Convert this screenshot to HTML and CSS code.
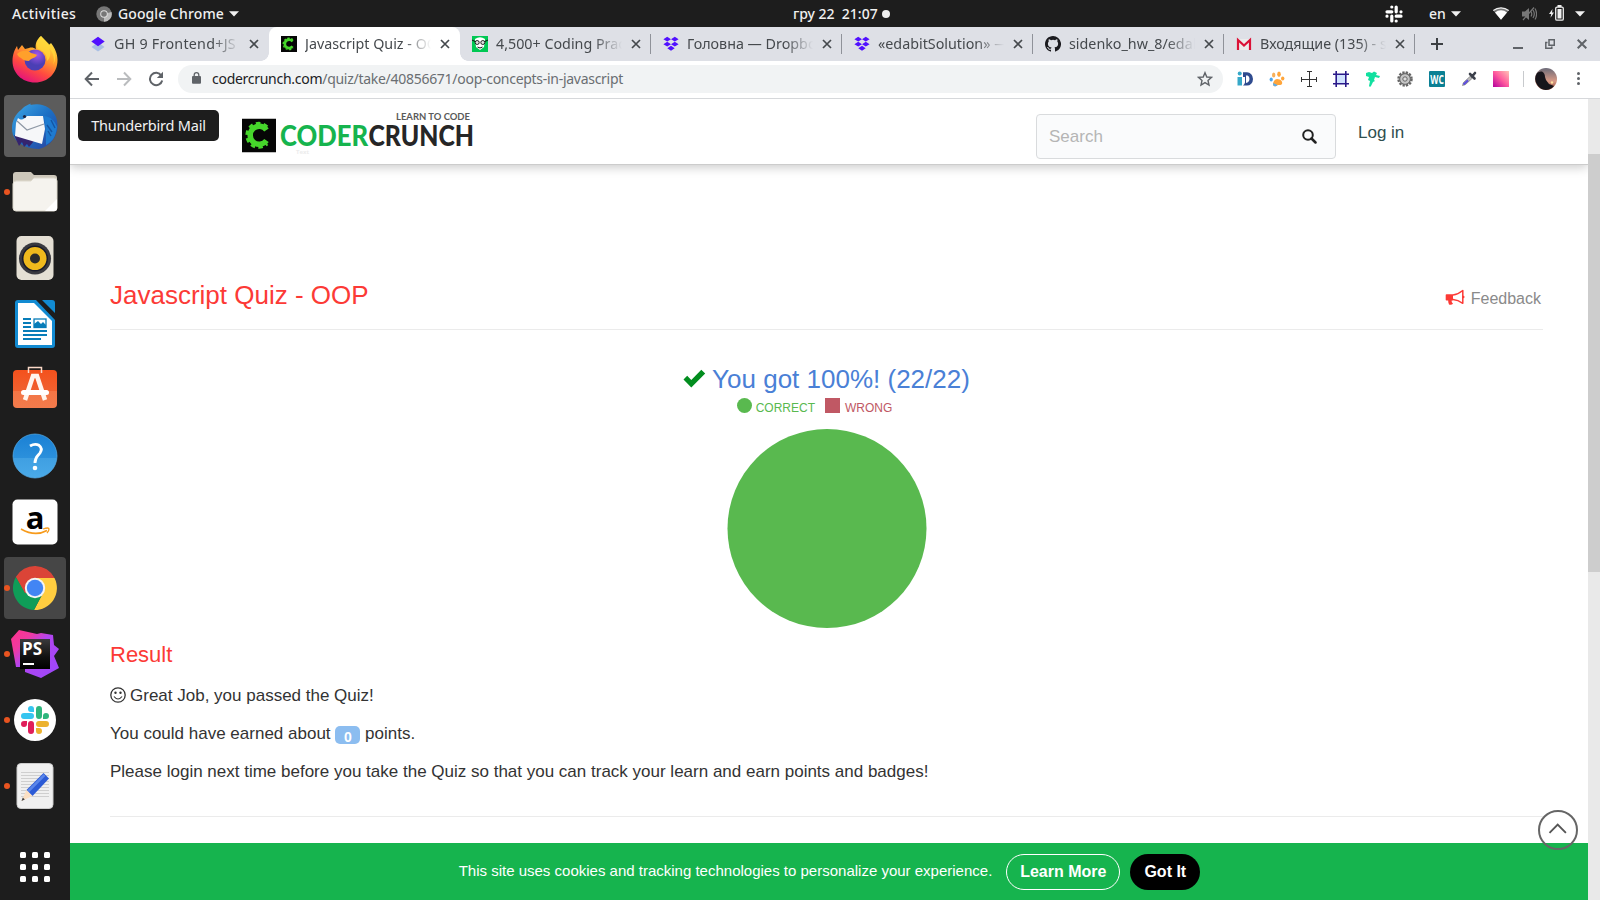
FILE: index.html
```html
<!DOCTYPE html>
<html lang="uk">
<head>
<meta charset="utf-8">
<title>Javascript Quiz - OOP</title>
<link rel="stylesheet" href="styles.css">
</head>
<body>
<svg class="defs" width="0" height="0" aria-hidden="true">
  <defs>
    <linearGradient id="ff" x1="0.8" y1="0" x2="0.3" y2="1"><stop offset="0" stop-color="#fff14a"/><stop offset=".4" stop-color="#ffa12b"/><stop offset=".7" stop-color="#ff4a40"/><stop offset="1" stop-color="#e3107f"/></linearGradient>
    <radialGradient id="ffin" cx=".6" cy=".25"><stop offset="0" stop-color="#a455e8"/><stop offset="1" stop-color="#4b3fb5"/></radialGradient>
    <linearGradient id="tb" x1="0" y1="0" x2="1" y2="1"><stop offset="0" stop-color="#3fa9e6"/><stop offset=".5" stop-color="#1c6fc4"/><stop offset="1" stop-color="#2b3f9c"/></linearGradient>
    <linearGradient id="sw" x1="0" y1="0" x2="0" y2="1"><stop offset="0" stop-color="#f4511c"/><stop offset=".55" stop-color="#f0602f"/><stop offset=".56" stop-color="#f37545"/><stop offset="1" stop-color="#f27b4c"/></linearGradient>
    <linearGradient id="hp" x1="0" y1="0" x2="0" y2="1"><stop offset="0" stop-color="#1a80d4"/><stop offset=".54" stop-color="#2b90dc"/><stop offset=".55" stop-color="#3f9fe2"/><stop offset="1" stop-color="#4aaae8"/></linearGradient>
    <linearGradient id="ps" x1="0" y1="0" x2="1" y2="1"><stop offset="0" stop-color="#ff318c"/><stop offset=".25" stop-color="#f03aa0"/><stop offset=".45" stop-color="#b345f1"/><stop offset="1" stop-color="#9a48fa"/></linearGradient>
    <linearGradient id="pk" x1="1" y1="0" x2="0" y2="1"><stop offset="0" stop-color="#ffc3b5"/><stop offset=".5" stop-color="#ff5a9d"/><stop offset="1" stop-color="#b3009c"/></linearGradient>
    <linearGradient id="sky" x1="0" y1="0" x2="0" y2="1"><stop offset="0" stop-color="#6b6a78"/><stop offset=".6" stop-color="#d99a86"/><stop offset="1" stop-color="#8c4634"/></linearGradient>
    <linearGradient id="psbox" x1="0" y1="0" x2="0" y2="1"><stop offset="0" stop-color="#3a3a3c"/><stop offset=".6" stop-color="#111"/><stop offset="1" stop-color="#000"/></linearGradient>
    <symbol id="dropbox" viewBox="0 0 16 16"><path fill="#5110ff" d="M4.200.8 8 3.200 4.200 5.600.4 3.200zM11.800.8l3.800 2.400-3.800 2.400L8 3.200zM4.200 5.800 8 8.200l-3.800 2.400L.4 8.200zM11.800 5.800l3.800 2.400-3.800 2.400L8 8.200zM8 9.800l3.700 2.400L8 14.700l-3.700-2.500z"/></symbol>
    <symbol id="close" viewBox="0 0 10 10"><path d="M1 1l8 8M9 1L1 9" stroke="#45494d" stroke-width="1.700"/></symbol>
    <symbol id="gear" viewBox="0 0 34 34"><rect width="34" height="34" fill="#060606"/><path fill="none" stroke="#46d62b" stroke-width="5.500" d="M24.500 11.500A9 9 0 1 0 24.500 22"/><path fill="none" stroke="#46d62b" stroke-width="3" stroke-dasharray="4.400 3.300" d="M25.200 8.200A12 12 0 1 0 25.200 25.400"/></symbol>
    <symbol id="caret" viewBox="0 0 10 6"><path d="M0 .3h10L5 5.600z" fill="#f0f0f0"/></symbol>
  </defs>
</svg>

<div class="desktop">
  <header class="topbar">
    <span class="activities">Activities</span>
    <svg class="tb-chrome" width="16" height="16" viewBox="0 0 16 16"><circle cx="8" cy="8" r="7.700" fill="#777"/><path d="M8 8l7.500-2A7.700 7.700 0 0 1 8 15.700z" fill="#bbb"/><circle cx="8" cy="8" r="3.800" fill="#ddd"/><circle cx="8" cy="8" r="2.800" fill="#777"/></svg>
    <span class="app-name">Google Chrome</span>
    <svg class="caret" width="10" height="6"><use href="#caret"/></svg>
    <span class="clock">гру 22&nbsp; 21:07</span>
    <span class="clock-dot"></span>
    <svg class="tray-slack" width="18" height="18" viewBox="0 0 18 18" stroke="#fff" stroke-width="3.200" stroke-linecap="round"><path d="M6.800 6.800H2M6.800 2v0M11.200 6.800V2M16 6.800v0M11.200 11.200H16M11.200 16v0M6.800 11.200V16M2 11.200v0"/></svg>
    <span class="lang">en</span>
    <svg class="caret lang-caret" width="10" height="6"><use href="#caret"/></svg>
    <svg class="wifi" width="16" height="13" viewBox="0 0 16 13"><path d="M.3 3.600A12 12 0 0 1 15.700 3.600L8 12.800z" fill="#777"/><path d="M.3 3.600A12 12 0 0 1 15.700 3.600" stroke="#eee" fill="none" stroke-width="1.200"/><path d="M2 5.600a9 9 0 0 1 12 0L8 12.800z" fill="#fff"/></svg>
    <svg class="volume" width="15" height="14" viewBox="0 0 15 14"><path d="M0 4.500h3L7 1v12L3 9.500H0z" fill="#777"/><path d="M9 4.500q1.500 2.500 0 5M11 3q2.600 4 0 8M13 1.500q3.200 5.500 0 11M1 13L12 .5" stroke="#777" fill="none" stroke-width="1.200"/></svg>
    <svg class="battery" width="15" height="16" viewBox="0 0 15 16"><path d="M3.500 4L0 9h2.200l-.7 3.800L5 7.500H3z" fill="#eee"/><rect x="6.700" y="2.200" width="7.600" height="13" rx="1.300" fill="none" stroke="#eee" stroke-width="1.300"/><rect x="8.500" y="4" width="4" height="9.500" fill="#eee"/><rect x="8.500" y="0" width="4" height="2" fill="#eee"/></svg>
    <svg class="caret sys-caret" width="10" height="6"><use href="#caret"/></svg>
  </header>

  <div class="workspace">
    <nav class="dock">
      <div class="app"><svg width="48" height="48" viewBox="0 0 48 48"><path fill="url(#ff)" d="M30 0c3 3 6 6 8 9l2-2c4 5 6.500 11 6.500 17C46.500 37 37 46.500 24 46.500S1.500 37 1.500 25C1.500 18 4 13 6 10l1 4 4-5 3 4 4-1c3-1 5 0 7 1-1-4 0-9 5-13z"/><circle cx="24" cy="24" r="10.500" fill="url(#ffin)"/><path fill="#ffa02b" d="M6 18c4-4 11-4 14-1 3 1 5 1 6 2-1 3-6 3-8 6-4 0-6-1-8-3-2-1-3-2-4-4z"/><path fill="#ffd83a" d="M30 0c-5 5-5 10-3 13 6 2 9 6 9 12 4-3 4-9 2-13 5 5 6 12 4 17 5-9 1-17-4-21-3-3-6-5-8-8z" opacity=".75"/></svg></div>
      <div class="app hover"><svg width="48" height="48" viewBox="0 0 48 48"><path fill="url(#tb)" d="M10 8C15 2 22 1 20 2l-1 1c12-3 22 2 26 12 5 14-3 29-17 32-10 0-22-4-26-14C-1 23 3 13 10 8z"/><path fill="#35246e" d="M3 33l5 11 3-4 2 5 3-3 2 3 5-6z"/><path fill="#f6f7f9" d="M5 21l2-5c4 3 6 1 9-2h16l2 13-3 15-27-8z"/><path d="M6 19l10 9 17-6" fill="none" stroke="#8e98a5" stroke-width="1.200"/><path fill="#1e7bd0" d="M33 14c7 1 11 5 13 11-1 10-5 15-11 18 0-8 0-17-2-29z"/><path d="M36 23l5 7M37 29l3 5M40 18l4 8" stroke="#1455a3" stroke-width="1.400"/><circle cx="13.500" cy="14.500" r="1.600" fill="#1b2340"/></svg></div>
      <div class="app running"><svg width="48" height="48" viewBox="0 0 48 48"><path fill="#cdc7ba" d="M2 7q0-3 3-3h15l3 3h20q3 0 3 3v8H2z"/><path fill="#f5f3ee" stroke="#dedace" d="M2 16q0-3 3-3h15l3-3h20q3 0 3 3v27q0 3-3 3H5q-3 0-3-3z"/><path fill="#fff" d="M46 31L34 43h9q3 0 3-3z"/></svg></div>
      <div class="app"><svg width="48" height="48" viewBox="0 0 48 48"><rect x="5.500" y="2" width="37" height="44" rx="5" fill="#e4dfd4"/><circle cx="24" cy="24.500" r="16" fill="#39393f"/><circle cx="24" cy="24.500" r="12.300" fill="#efb91d" stroke="#171a2b" stroke-width="1.500"/><circle cx="24" cy="24.500" r="5" fill="#2c2c2c"/></svg></div>
      <div class="app"><svg width="48" height="48" viewBox="0 0 48 48"><path fill="#128bd2" d="M7 0h18l19 20v25q0 3-3 3H7q-3 0-3-3V3q0-3 3-3zM31 0h10q3 0 3 3v10z"/><path fill="#fff" d="M7 3h16l18 18v24H7z"/><g stroke="#087db9" stroke-width="2"><path d="M12 19h8M12 23h8M12 27h8M12 31h24M12 35h24M12 39h18"/><rect x="23" y="19" width="12" height="8.500" fill="#fff" stroke-width="1.300"/></g><path d="M23 27v-3l4-3 3 3 2-2 3 3v2z" fill="#087db9"/></svg></div>
      <div class="app"><svg width="48" height="48" viewBox="0 0 48 48"><rect x="2" y="4" width="44" height="38" rx="4" fill="url(#sw)"/><path d="M17.500 7V1.500h13V7" fill="none" stroke="#fbd9c8" stroke-width="1.500"/><path d="M14 34L22 10h4l8 24" fill="none" stroke="#fff5ee" stroke-width="4.500"/><rect x="10" y="24" width="28" height="5" rx="2.500" fill="#fff"/></svg></div>
      <div class="app"><svg width="48" height="48" viewBox="0 0 48 48"><circle cx="24" cy="24" r="22" fill="url(#hp)" stroke="#55aee9" stroke-width=".7"/><path d="M19 14q5-3 9-.7 4 3 1 7.700c-3 4-5 4-5 10" fill="none" stroke="#fff" stroke-width="2.800"/><circle cx="24" cy="36" r="2.300" fill="#fff"/></svg></div>
      <div class="app"><svg width="48" height="48" viewBox="0 0 48 48"><rect x="1.500" y="1.500" width="45" height="45" rx="5" fill="#fff"/><text class="amazon" x="24" y="30.500" text-anchor="middle">a</text><path d="M10 31q14 8 26 1.500" fill="none" stroke="#f79b1c" stroke-width="1.700"/><path d="M32 31q6-2 6 0 0 2-2 4" fill="none" stroke="#f79b1c" stroke-width="1.300"/></svg></div>
      <div class="app running active"><svg width="48" height="48" viewBox="0 0 48 48"><path fill="#db4437" d="M4.800 13A22 22 0 0 1 43.500 14H24L14 30z"/><path fill="#ffcd40" d="M43.500 14A22 22 0 0 1 23 46l9-17-8-15z"/><path fill="#0f9d58" d="M4.900 13A22 22 0 0 0 23 46l9-17H14z"/><circle cx="24" cy="24" r="10.200" fill="#f4f4f4"/><circle cx="24" cy="24" r="8.200" fill="#4285f4"/></svg></div>
      <div class="app running"><svg width="48" height="48" viewBox="0 0 48 48"><path fill="url(#ps)" d="M0 9L8 0l18 4 4-1 12 2 1 10 5 4-5 7 5 12-18 10-16-6V37H5z"/><rect x="9" y="9" width="30" height="30" fill="url(#psbox)"/><text class="ps-text" x="11" y="24.500">PS</text><rect x="12" y="33" width="11" height="2" fill="#fff"/></svg></div>
      <div class="app running"><svg width="48" height="48" viewBox="0 0 48 48"><circle cx="24" cy="24" r="21" fill="#fff"/><g stroke-width="6" stroke-linecap="round"><path stroke="#36c5f0" d="M20 20h-7M20 13v0"/><path stroke="#2eb67d" d="M28 20v-7M35 20v0"/><path stroke="#ecb22e" d="M28 28h7M28 35v0"/><path stroke="#e01e5a" d="M20 28v7M13 28v0"/></g><path fill="#36c5f0" d="M20 13h3v3h-3z"/><path fill="#2eb67d" d="M32 20h3v3h-3z"/><path fill="#ecb22e" d="M25 32h3v3h-3z"/><path fill="#e01e5a" d="M13 25h3v3h-3z"/></svg></div>
      <div class="app running"><svg width="48" height="48" viewBox="0 0 48 48"><rect x="6" y="1.500" width="36" height="45" rx="4" fill="#f0f0f0" stroke="#ccc"/><path d="M10 10.500h28M10 13.500h28M10 16.500h28M10 19.500h28M10 22.500h28M10 25.500h28M10 28.500h28M10 31.500h28M10 34.500h28" stroke="#cfcfcf"/><path fill="#2c5bd6" d="M32.500 11L38 16.500 21.500 34 15.500 28z"/><path d="M33.500 13L17 29.500" stroke="#5a86ea" stroke-width="2.500"/><path fill="#fbe0c4" d="M15.500 28l6 6L10.500 39z"/><path fill="#444" d="M11.800 35.500l2 2-3.300 1.500z"/></svg></div>
      <div class="app-grid"><i></i><i></i><i></i><i></i><i></i><i></i><i></i><i></i><i></i></div>
    </nav>
    <div class="tooltip">Thunderbird Mail</div>

    <main class="browser">
      <div class="tabstrip">
        <div class="tab"><svg class="fav" viewBox="0 0 16 16"><path fill="#a9bfe4" d="M1.500 11L8 6l6.500 5L8 15.500z"/><path fill="#5110ff" d="M1.300 5.500L8 .7l6.700 4.800L8 10.200z"/></svg><span class="label wide">GH 9 Frontend+JS</span><svg class="x"><use href="#close"/></svg></div>
        <div class="tab current"><svg class="fav"><use href="#gear"/></svg><span class="label">Javascript Quiz - OOP</span><svg class="x"><use href="#close"/></svg></div>
        <div class="tab sep"><svg class="fav" viewBox="0 0 16 16"><rect width="16" height="16" fill="#00c853"/><path d="M3 3q5-3.500 10 0l-1 8-4 3-4-3z" fill="#fff"/><circle cx="5.200" cy="6.500" r="2" fill="#ddd" stroke="#111" stroke-width=".9"/><circle cx="10.800" cy="6.500" r="2" fill="#ddd" stroke="#111" stroke-width=".9"/><path d="M0 4l3 1.500M16 4l-3 1.500M5.500 11q2.500 2 5 0" stroke="#111" fill="none"/></svg><span class="label">4,500+ Coding Practice</span><svg class="x"><use href="#close"/></svg></div>
        <div class="tab sep"><svg class="fav"><use href="#dropbox"/></svg><span class="label">Головна — Dropbox</span><svg class="x"><use href="#close"/></svg></div>
        <div class="tab sep"><svg class="fav"><use href="#dropbox"/></svg><span class="label">«edabitSolution» — D</span><svg class="x"><use href="#close"/></svg></div>
        <div class="tab sep"><svg class="fav" viewBox="0 0 16 16"><path fill="#1b1b1f" d="M8 0C3.580 0 0 3.580 0 8c0 3.540 2.290 6.530 5.470 7.590.4.070.55-.17.55-.38 0-.19-.01-.82-.01-1.490-2.010.37-2.530-.49-2.690-.94-.09-.23-.48-.94-.82-1.130-.28-.15-.68-.52-.01-.53.63-.01 1.080.58 1.230.82.72 1.210 1.870.87 2.330.66.07-.52.28-.87.51-1.070-1.780-.2-3.640-.89-3.640-3.950 0-.87.31-1.590.82-2.150-.08-.2-.36-1.020.08-2.120 0 0 .67-.21 2.200.82a7.600 7.600 0 0 1 4 0c1.530-1.040 2.200-.82 2.200-.82.44 1.100.16 1.920.08 2.120.51.56.82 1.270.82 2.150 0 3.070-1.870 3.750-3.650 3.950.29.25.54.73.54 1.480 0 1.070-.01 1.930-.01 2.200 0 .21.15.46.55.38A8 8 0 0 0 8 0z"/></svg><span class="label">sidenko_hw_8/edabit</span><svg class="x"><use href="#close"/></svg></div>
        <div class="tab sep"><svg class="fav" viewBox="0 0 16 16"><path fill="#ececec" d="M2 3h12v11H2z"/><path fill="none" stroke="#db1237" stroke-width="2.200" d="M2 14V4l6 5.500L14 4v10"/></svg><span class="label">Входящие (135) - sid</span><svg class="x"><use href="#close"/></svg></div>
        <svg class="new-tab" width="12" height="12" viewBox="0 0 12 12"><path d="M6 0v12M0 6h12" stroke="#3c4043" stroke-width="2"/></svg>
        <div class="win-buttons">
          <svg width="10" height="10" viewBox="0 0 10 10"><path d="M0 9h10" stroke="#5f6368" stroke-width="2"/></svg>
          <svg width="10" height="10" viewBox="0 0 10 10"><path d="M4 .8h5.300v5.400H4zM2.500 3.500H.8v5.700h6V7.600" fill="none" stroke="#5f6368" stroke-width="1.500"/></svg>
          <svg width="10" height="10" viewBox="0 0 10 10"><path d="M.7.7l8.600 8.600M9.300.7L.7 9.300" stroke="#5f6368" stroke-width="2"/></svg>
        </div>
      </div>

      <div class="toolbar">
        <svg width="16" height="16" viewBox="0 0 16 16"><path d="M15 8H2M8 1.500L1.700 8 8 14.500" fill="none" stroke="#5f6368" stroke-width="2"/></svg>
        <svg width="16" height="16" viewBox="0 0 16 16"><path d="M1 8h13M8 1.500L14.300 8 8 14.500" fill="none" stroke="#babcbe" stroke-width="2"/></svg>
        <svg width="16" height="16" viewBox="0 0 16 16"><path d="M13.300 4.500A6.200 6.200 0 1 0 14.200 9.500" fill="none" stroke="#5f6368" stroke-width="2"/><path d="M15 .8v6.200H8.800z" fill="#5f6368"/></svg>
        <div class="omnibox">
          <svg class="lock" width="9" height="12" viewBox="0 0 9 12"><rect y="4" width="9" height="7.700" rx="1" fill="#5f6368"/><path d="M2.200 5V3a2.300 2.300 0 0 1 4.600 0v2" fill="none" stroke="#5f6368" stroke-width="1.300"/></svg>
          <span class="host">codercrunch.com</span><span class="path">/quiz/take/40856671/oop-concepts-in-javascript</span>
          <svg class="star" width="16" height="16" viewBox="0 0 16 16"><path d="M8 1.700l1.800 4.300 4.700.4-3.500 3 1 4.600L8 11.600 4 14l1-4.600-3.500-3L6.200 6z" fill="none" stroke="#5f6368" stroke-width="1.400"/></svg>
        </div>
        <div class="extensions">
          <svg viewBox="0 0 16 16"><circle cx="2.700" cy="2.500" r="2" fill="#36a8c8"/><path d="M.5 6H5v8.500H.5z" fill="#36a8c8"/><path fill="#2f4b8f" fill-rule="evenodd" d="M6 1.200h4a6 6.700 0 0 1 0 13.400H6q1.500-1 2-3V6H6zM9 4.500h1.500q2 .8 2 3.500t-2 3.500L9 12z"/></svg>
          <svg viewBox="0 0 16 16" fill="#ffa53a"><ellipse cx="10" cy="3.200" rx="1.800" ry="2.700"/><ellipse cx="4.700" cy="4" rx="1.700" ry="2.500" fill="#f7b05a"/><ellipse cx="13.700" cy="7.500" rx="1.700" ry="2"/><ellipse cx="2.200" cy="8.500" rx="1.600" ry="1.900" fill="#4aa6ef"/><path d="M8 8c4 0 6 3 5 5-1.500 2-3 .3-5 1.500-2 1.500-4 1-4-1.500 0-2 2-5 4-5z"/><path d="M4.200 12q-.5 3.500 2.300 3.200 1.500-.4 2-1.200z" fill="#5aaef0"/></svg>
          <svg viewBox="0 0 16 16"><path d="M8.500.5v15M.5 8.500h15M6 .5h5M6 15.500h5M.5 6v5M15.500 6v5" stroke="#333" fill="none"/></svg>
          <svg viewBox="0 0 16 16"><rect x="3" y="3" width="10" height="10" fill="#cfe2ff"/><path d="M3.200 0v16M12.800 0v16M0 3.200h16M0 12.800h16" stroke="#2a1a8a" stroke-width="1.600"/></svg>
          <svg viewBox="0 0 16 16"><path fill="#12e0a0" d="M1 2l3-1 3 1 2-1.500L12 2l-1 2 4 1-1 2-4-1-1 3 1 1-2 1-2 4-1 1-1-1 1-5-2-1 1-3-3-1z"/></svg>
          <svg viewBox="0 0 16 16"><circle cx="8" cy="8" r="6.500" fill="#b5b5b5" stroke="#666" stroke-width="2.500" stroke-dasharray="2.200 1.200"/><circle cx="8" cy="8" r="5.300" fill="#c5c5c5" stroke="#666"/><circle cx="8" cy="8" r="2.200" fill="#ddd" stroke="#666"/></svg>
          <svg viewBox="0 0 16 16"><rect width="16" height="16" rx="1" fill="#0b8094"/><text class="wc" x="1.200" y="12.500" textLength="13.600" lengthAdjust="spacingAndGlyphs">WC</text></svg>
          <svg viewBox="0 0 16 16"><path d="M1.500 14.500l1-3 7-6.500 2 2-7 6.500z" fill="#bbb" stroke="#777" stroke-width=".7"/><path d="M2.500 13.500L7 9.300" stroke="#5b4be0" stroke-width="2"/><path d="M9 3l4.500 4.500M11 5.500L14 2" stroke="#3b3f4a" stroke-width="2.600" stroke-linecap="round"/></svg>
          <svg viewBox="0 0 16 16"><rect width="16" height="16" fill="url(#pk)"/></svg>
        </div>
        <span class="divider"></span>
        <svg class="avatar" width="22" height="22" viewBox="0 0 22 22"><circle cx="11" cy="11" r="11" fill="url(#sky)"/><path d="M2 5A11 11 0 0 0 14 21.500q3-1 5-3.500l-5-2-3-4-1-3q0-4-3-5.500Q4 3 2 5z" fill="#17151b"/><circle cx="17" cy="14.500" r="1.200" fill="#ffe3a0"/></svg>
        <span class="kebab"><i></i><i></i><i></i></span>
      </div>

      <div class="viewport">
        <div class="page">
          <header class="site-header">
            <svg class="logo" width="240" height="48" viewBox="0 0 240 48">
              <svg x="2" y="9.500" width="34" height="34"><use href="#gear"/></svg>
              <text class="tagline" x="156" y="11" textLength="74" lengthAdjust="spacingAndGlyphs">LEARN TO CODE</text>
              <text class="word green" x="40" y="36.500" textLength="88" lengthAdjust="spacingAndGlyphs">CODER</text>
              <text class="word dark" x="128.500" y="36.500" textLength="105.500" lengthAdjust="spacingAndGlyphs">CRUNCH</text>
              <text class="ghost" x="56" y="44.500">Text</text>
            </svg>
            <div class="search"><span>Search</span><svg width="15" height="15" viewBox="0 0 15 15"><circle cx="6" cy="6" r="4.800" fill="none" stroke="#222" stroke-width="2"/><path d="M9.500 9.500l4 4" stroke="#222" stroke-width="2.500" stroke-linecap="round"/></svg></div>
            <a class="login">Log in</a>
          </header>

          <section class="content">
            <div class="title-row">
              <h1>Javascript Quiz - OOP</h1>
              <a class="feedback"><svg width="20" height="17" viewBox="0 0 20 17"><path fill="#fc3a36" d="M1.500 5.300H8v6.200H6.700q-.6 1.500 1.300 3.200-1.500 1.600-4 .8Q3 13 3.200 11.500H1.500Q.7 11.500.7 10.700V6.100q0-.8.8-.8z"/><path fill="none" stroke="#fc3a36" stroke-width="1.500" stroke-linejoin="round" d="M8 6q5-.5 9.800-4.500v12.800Q13 10.800 8 10.500"/><circle cx="18.300" cy="8" r="1.200" fill="#fc3a36"/></svg>Feedback</a>
            </div>
            <div class="score">
              <svg width="23" height="19" viewBox="0 0 23 19"><path fill="#028d1f" d="M.5 10.500l3.700-3.700 4.100 4.100L18.300.8 22.200 4.600 8.300 18.500z"/></svg>
              <span>You got 100%! (22/22)</span>
            </div>
            <div class="legend"><i class="dot"></i><span class="ok">CORRECT</span><i class="box"></i><span class="bad">WRONG</span></div>
            <div class="pie"></div>
            <h2>Result</h2>
            <p><svg class="smile" width="16" height="16" viewBox="0 0 16 16"><circle cx="8" cy="8" r="7.200" fill="none" stroke="#333" stroke-width="1.300"/><circle cx="5.500" cy="5.800" r="1.200" fill="#333"/><circle cx="10.500" cy="5.800" r="1.200" fill="#333"/><path d="M4 9.500q4 5 8 0" fill="none" stroke="#333" stroke-width="1.200"/></svg>Great Job, you passed the Quiz!</p>
            <p>You could have earned about <span class="badge">0</span> points.</p>
            <p>Please login next time before you take the Quiz so that you can track your learn and earn points and badges!</p>
          </section>

          <footer class="cookies">
            <span>This site uses cookies and tracking technologies to personalize your experience.</span>
            <a class="more">Learn More</a>
            <a class="got">Got It</a>
          </footer>
          <svg class="to-top" width="40" height="40" viewBox="0 0 40 40"><circle cx="20" cy="20" r="19" fill="none" stroke="#666" stroke-width="2"/><path d="M11.500 22.800L19.700 14.600 27.900 22.800" fill="none" stroke="#555" stroke-width="1.900"/></svg>
        </div>
        <div class="scrollbar"><div class="thumb"></div></div>
      </div>
    </main>
  </div>
</div>
</body>
</html>
```
FILE: styles.css
```css
* { box-sizing: border-box; }
body { margin: 0; font-family: "Liberation Sans", Arial, sans-serif; }
.defs { position: absolute; }
svg { display: block; flex: none; }
.desktop { width: 1600px; height: 900px; overflow: hidden; display: flex; flex-direction: column; background: #1d1d1d; }

/* system bar */
.topbar { height: 27px; flex: none; display: flex; align-items: center; color: #f0f0f0; font: 500 14px/27px "Noto Sans", "Open Sans", sans-serif; white-space: nowrap; }
.activities { width: 65px; margin-left: 12px; letter-spacing: 0.4px; }
.tb-chrome { margin-left: 19px; }
.app-name { width: 107px; margin-left: 6px; letter-spacing: 0.1px; }
.caret { margin-left: 4px; }
.clock { width: 85px; margin-left: 554px; }
.clock-dot { width: 8px; height: 8px; border-radius: 50%; background: #eee; margin-left: 4px; }
.tray-slack { margin-left: 495px; }
.lang { width: 17px; margin-left: 26px; }
.lang-caret { margin-left: 5px; }
.wifi { margin-left: 32px; }
.volume { margin-left: 13px; }
.battery { margin-left: 12px; margin-bottom: 2px; }
.sys-caret { margin-left: 11px; }

/* dock */
.workspace { flex: 1; display: flex; min-height: 0; position: relative; }
.dock { width: 70px; flex: none; display: flex; flex-direction: column; background: #1d1d1d; }
.app { width: 62px; height: 62px; margin: 2px 4px; border-radius: 4px; display: flex; align-items: center; justify-content: center; position: relative; }
.app.hover { background: #5c5c5c; }
.app.active { background: #464646; }
.app.running::before { content: ""; position: absolute; left: 0; top: 28px; width: 6px; height: 6px; border-radius: 50%; background: #e95420; }
.amazon { font: bold 31px "Open Sans", sans-serif; fill: #000; }
.ps-text { font: bold 17px "Open Sans", sans-serif; fill: #fff; }
.app-grid { display: grid; grid-template-columns: repeat(3, 6px); gap: 6px; margin: 33px 0 0 20px; }
.app-grid i { width: 6px; height: 6px; border-radius: 1.500px; background: #fff; }
.tooltip { position: absolute; left: 78px; top: 83px; width: 141px; height: 31px; border-radius: 5px; background: #1d1d1d; color: #f2f2f2; text-align: center; font: 14.500px/30px "Noto Sans", sans-serif; letter-spacing: -0.2px; z-index: 3; }

/* browser chrome */
.browser { flex: 1; min-width: 0; display: flex; flex-direction: column; background: #fff; }
.tabstrip { height: 34px; flex: none; display: flex; align-items: center; padding-left: 8px; background: #dee0e6; }
.tab { width: 191px; height: 34px; padding-left: 12px; display: flex; align-items: center; position: relative; }
.tab.sep::after { content: ""; position: absolute; right: 0; top: 7px; width: 1px; height: 20px; background: #8f9299; }
.tab.current { background: #fff; border-radius: 8px 8px 0 0; }
.tab.current::before, .tab.current::after { content: ""; position: absolute; bottom: 0; width: 8px; height: 8px; }
.tab.current::before { left: -8px; background: radial-gradient(circle at 0 0, transparent 7.500px, #fff 8px); }
.tab.current::after { right: -8px; background: radial-gradient(circle at 100% 0, transparent 7.500px, #fff 8px); }
.fav { width: 16px; height: 16px; }
.label { width: 127px; margin-left: 8px; overflow: hidden; white-space: nowrap; font: 14.300px/34px "Noto Sans", sans-serif; color: #45494d; -webkit-mask-image: linear-gradient(to right, #000 98px, transparent 126px); mask-image: linear-gradient(to right, #000 98px, transparent 126px); }
.label.wide { letter-spacing: 0.25px; }
.x { width: 10px; height: 10px; margin-left: 8px; }
.new-tab { margin-left: 16px; }
.win-buttons { display: flex; gap: 22px; margin-left: auto; margin-right: 13px; }
.toolbar { height: 38px; flex: none; display: flex; align-items: center; padding: 0 19px 2px 14px; border-bottom: 1px solid #d6d8db; gap: 16px; }
.omnibox { width: 1045px; height: 28px; margin-left: -2px; border-radius: 14px; background: #f1f3f4; display: flex; align-items: center; padding: 0 10px 0 14px; font: 14px/28px "Noto Sans", sans-serif; letter-spacing: -0.28px; color: #6a6e72; }
.lock { margin-right: 11px; margin-bottom: 2px; }
.host { color: #202124; }
.star { margin-left: auto; }
.extensions { display: flex; gap: 16px; margin-left: -2px; }
.extensions svg { width: 16px; height: 16px; }
.wc { font: bold 12px "Open Sans", sans-serif; fill: #fff; }
.divider { width: 1px; height: 16px; background: #c8cacd; margin-left: -2px; }
.avatar { margin-left: -5px; }
.kebab { display: flex; flex-direction: column; gap: 2px; margin-left: 4px; }
.kebab i { width: 3px; height: 3px; border-radius: 50%; background: #5f6368; }

/* page */
.viewport { flex: 1; display: flex; min-height: 0; }
.page { width: 1518px; flex: none; display: flex; flex-direction: column; position: relative; color: #333; }
.scrollbar { width: 12px; background: #e9e9e9; padding-top: 55px; }
.thumb { height: 418px; background: #cdcdcd; }
.site-header { height: 66px; flex: none; display: flex; align-items: flex-start; border-bottom: 1px solid #ccc; box-shadow: 0 2px 10px rgba(0,0,0,.22); clip-path: inset(0 0 -20px 0); }
.logo { margin: 10px 0 0 170px; }
.word { font: 900 29px Lato, sans-serif; }
.green { fill: #16b44e; }
.dark { fill: #262626; }
.tagline { font: bold 10px Lato, sans-serif; fill: #5a5a5a; }
.ghost { font: bold 6px "Open Sans", sans-serif; fill: #ececec; }
.search { width: 300px; height: 45px; margin: 15px 0 0 556px; border: 1px solid #d9dbdd; border-radius: 4px; background: #fafbfc; display: flex; align-items: center; justify-content: space-between; padding: 0 18px 0 12px; font-size: 17px; color: #b5b5b5; }
.login { margin: 24px 0 0 22px; font-size: 17px; line-height: 19px; color: #2f4f4f; }

.content { margin: 0 45px 0 40px; height: 652px; border-bottom: 1px solid #ebebeb; }
.title-row { height: 165px; display: flex; align-items: flex-end; justify-content: space-between; border-bottom: 1px solid #ebebeb; }
h1, h2 { font-weight: normal; color: #fc3a36; margin: 0; }
h1 { font-size: 26px; line-height: 30px; margin-bottom: 19px; }
.feedback { display: flex; align-items: center; gap: 6px; font-size: 16px; line-height: 18px; color: #8a8a8a; margin: 0 2px 20px 0; }
.feedback svg { margin-bottom: 3px; }
.score { height: 30px; margin-top: 34px; display: flex; justify-content: center; align-items: center; gap: 6px; font-size: 26px; line-height: 30px; color: #4a80d6; }
.score svg { margin-bottom: 1px; }
.legend { display: flex; justify-content: center; align-items: flex-start; height: 15px; margin-top: 4px; font-size: 12px; line-height: 20px; transform: translateX(-12px); }
.legend i { width: 15px; height: 15px; }
.dot { border-radius: 50%; background: #59b94f; margin-right: 4px; }
.box { background: #c05864; margin: 0 5px 0 10px; }
.ok { color: #59b94f; }
.bad { color: #c05864; }
.pie { width: 199px; height: 199px; border-radius: 50%; background: #59b94f; margin: 16px auto 0; transform: translateX(0.5px); }
h2 { font-size: 22px; line-height: 26px; margin: 14px 0 16px; }
.content p { margin: 0 0 14px; font-size: 17px; line-height: 24px; height: 24px; white-space: nowrap; }
.smile { display: inline-block; vertical-align: -2px; margin-right: 4px; }
.badge { display: inline-block; width: 25px; height: 18px; border-radius: 5px; background: #8cbdf0; color: #fff; font: bold 14px/22px "Liberation Sans", sans-serif; text-align: center; vertical-align: -3px; }
.cookies { height: 57px; margin-top: auto; display: flex; justify-content: center; align-items: center; background: #16b44e; color: #fff; font-size: 15px; }
.cookies span { margin: 0 0 2px 1px; }
.cookies a { height: 36px; border-radius: 18px; font-weight: bold; font-size: 16px; line-height: 34px; text-align: center; }
.more { width: 114px; border: 1px solid #fff; margin-left: 14px; }
.cookies .got { width: 70px; background: #000; margin-left: 10px; line-height: 36px; }
.to-top { position: absolute; left: 1468px; top: 711px; z-index: 2; }
```
